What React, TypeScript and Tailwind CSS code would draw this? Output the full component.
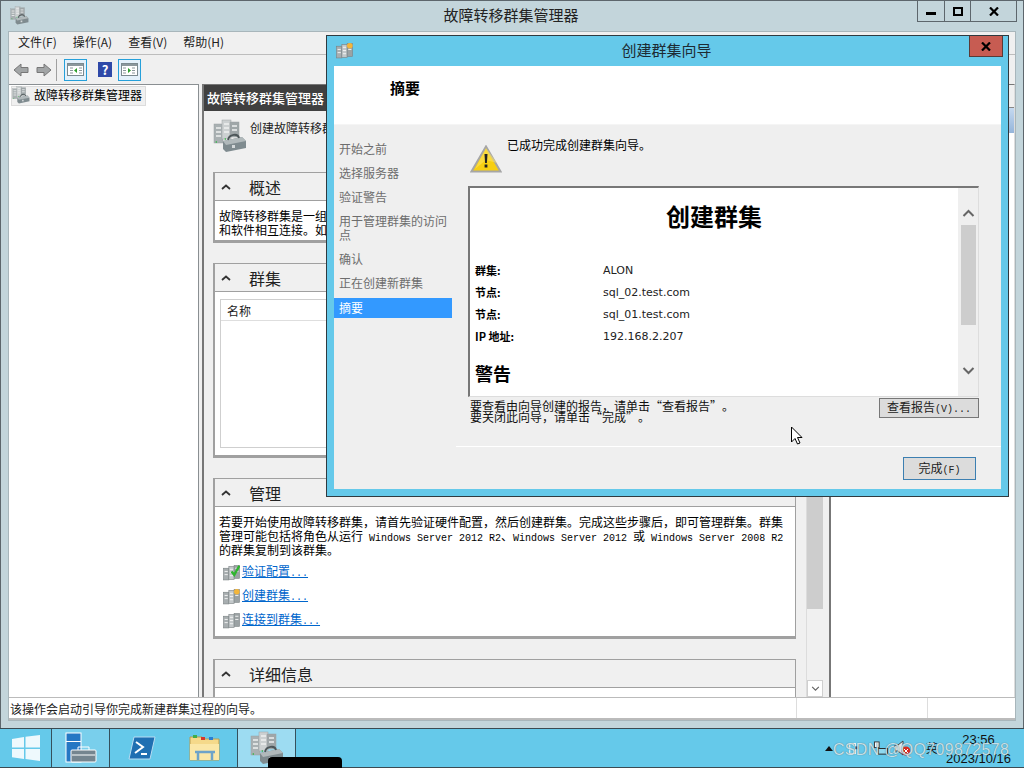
import React from "react";

const cjk = "font-['Noto_Sans_CJK_SC','Liberation_Sans',sans-serif]";
const mono = "font-['Liberation_Mono',monospace] text-[10px]";

function Servers({ className = "", accent }: { className?: string; accent?: "check" | "star" }) {
  return (
    <svg viewBox="0 0 16 16" className={className}>
      <rect x="0.5" y="4" width="5" height="11" fill="#a8aeb0" stroke="#7d8486" strokeWidth="0.6" />
      <rect x="5.5" y="2.5" width="5" height="12" fill="#c3c8ca" stroke="#7d8486" strokeWidth="0.6" />
      <rect x="10.5" y="1.5" width="5" height="12" fill="#9ba2a4" stroke="#7d8486" strokeWidth="0.6" />
      <path d="M1.5 7h3M1.5 10h3M6.5 5h3M6.5 8h3M6.5 11h3M11.5 4h3M11.5 7h3" stroke="#f2f2f2" strokeWidth="0.9" />
      {accent === "check" && <path d="M8 7l2.6 3.2L15.4 1.6" fill="none" stroke="#2fb52f" strokeWidth="2.2" />}
      {accent === "star" && <circle cx="13" cy="3.5" r="2.6" fill="#f4b63a" />}
    </svg>
  );
}

function Toolbox({ className = "" }: { className?: string }) {
  return (
    <svg viewBox="0 0 34 34" className={className}>
      <g stroke="#9aa1a3" strokeWidth="0.5">
        <rect x="1" y="5" width="9" height="19" fill="#a9b0b2" />
        <rect x="9" y="1" width="9" height="19" fill="#ccd0d1" />
        <rect x="17" y="3" width="9" height="15" fill="#9fa6a8" />
      </g>
      <path d="M3 9h5M3 13h5M3 17h5M11 5h5M11 9h5M11 13h5M19 7h5M19 11h5" stroke="#eef0f0" strokeWidth="1.5" />
      <path d="M2 23l2-1v2zM11 20l2-1v2z" fill="#37b54a" />
      <path d="M10 22l19-4 4 4v7l-20 4-3-3z" fill="#7f8b8f" />
      <path d="M10 22l19-4 4 4-20 4z" fill="#b1b9bb" />
      <path d="M15 21c1-6 10-7 11-2" fill="none" stroke="#4d5659" strokeWidth="1.8" />
      <rect x="19" y="26" width="3" height="3" fill="#d4d8d9" />
    </svg>
  );
}

function Section({ title, bodyClass, children }: { title: string; bodyClass: string; children: React.ReactNode }) {
  return (
    <section className="flex flex-col border border-[#a0a0a0] border-b-[3px] border-l-2 bg-white">
      <div className="flex h-[28px] shrink-0 items-center border-b border-[#a0a0a0] bg-[#f0f0f0]">
        <svg viewBox="0 0 10 6" className="ml-[6px] h-[6px] w-[10px]">
          <path d="M1 5l4-3.500L9 5" fill="none" stroke="#333" strokeWidth="1.8" />
        </svg>
        <span className="ml-[18px] text-[16px] leading-none text-[#222]">{title}</span>
      </div>
      <div className={bodyClass}>{children}</div>
    </section>
  );
}

function LinkRow({ accent, text }: { accent?: "check" | "star"; text: string }) {
  return (
    <div className="flex h-[24px] items-center">
      <Servers className="h-[17px] w-[17px]" accent={accent} />
      <a className="ml-[2px] text-[12px] leading-none text-[#0066cc] underline">
        {text}
        <span className={mono}>...</span>
      </a>
    </div>
  );
}

function WinBtn({ children, className }: { children: React.ReactNode; className: string }) {
  return <div className={`flex h-[21px] items-center justify-center border border-t-0 border-[#5d666c] ${className}`}>{children}</div>;
}

function ReportRow({ k, v }: { k: string; v: string }) {
  return (
    <div className="flex h-[22px] items-center">
      <span className="w-[128px] text-[11px] font-bold leading-none text-black">{k}</span>
      <span className="font-['DejaVu_Sans',sans-serif] text-[11px] leading-none text-[#222]">{v}</span>
    </div>
  );
}

function Quoted({ text }: { text: string }) {
  return (
    <>
      <span className="inline-block w-[12px] text-right">“</span>
      {text}
      <span className="inline-block w-[12px] text-left">”</span>
    </>
  );
}

function Wizard() {
  const steps = ["开始之前", "选择服务器", "验证警告", "用于管理群集的访问点", "确认", "正在创建新群集"];
  return (
    <div className="absolute left-[326px] top-[35px] flex h-[462px] w-[683px] flex-col border border-[#2f3a40] bg-[#65c9ea]">
      <div className="relative flex h-[30px] shrink-0 items-center justify-center">
        <Servers className="absolute left-[9px] top-[6px] h-[17px] w-[17px]" accent="star" />
        <span className="mb-[4px] pr-[2px] text-[15px] leading-none text-[#1d2b33]">创建群集向导</span>
        <div className="absolute right-[5px] top-0 flex h-[21px] w-[34px] items-center justify-center border border-t-0 border-[#5a3a36] bg-[#c75c52]">
          <svg viewBox="0 0 10 9" className="h-[9px] w-[10px]"><path d="M1 .5l8 8M9 .5l-8 8" stroke="#000" strokeWidth="2.2" /></svg>
        </div>
      </div>
      <div className="mx-[7px] mb-[7px] flex min-h-0 flex-1 flex-col bg-[#efefef]">
        <div className="flex h-[59px] shrink-0 items-start border-b border-[#f5f5f5] bg-white pl-[56px] pt-[13px]">
          <span className="text-[15px] font-bold leading-[18px] text-black">摘要</span>
        </div>
        <div className="mt-[2px] flex min-h-0 flex-1">
          <nav className="w-[120px] shrink-0 pt-[10px] text-[12px]">
            {steps.map((s) => (
              <div key={s} className="px-[5px] py-[5px] leading-[14px] text-[#6d6d6d]">{s}</div>
            ))}
            <div className="mr-[2px] mt-[3px] flex h-[20px] items-center bg-[#3399ff] px-[5px] text-white">摘要</div>
          </nav>
          <div className="ml-[2px] flex min-w-0 flex-1 flex-col">
            <div className="flex h-[59px] shrink-0 pl-[14px] pt-[18px]">
              <svg viewBox="0 0 32 28" className="h-[28px] w-[32px]">
                <path d="M16 1.500L30.500 26.500H1.500z" fill="#f7cf12" stroke="#a6a6a6" strokeWidth="2" />
                <path d="M16 3L5 24l11-9 11 3z" fill="#ffe76a" opacity="0.5" />
                <path d="M14.500 9h3l-.6 9h-1.800z" fill="#222" />
                <rect x="14.600" y="19.500" width="2.800" height="3" fill="#222" />
              </svg>
              <span className="ml-[5px] mt-[-7px] text-[12px] leading-[14px] text-black">已成功完成创建群集向导。</span>
            </div>
            <div className="ml-[12px] flex h-[211px] w-[511px] shrink-0 border-t-2 border-l-2 border-r border-b border-[#777] border-r-[#ddd] border-b-[#ddd]">
              <div className="min-w-0 flex-1 overflow-hidden bg-white pl-[5px]">
                <h1 className="mt-[12px] pr-[5px] text-center text-[24px] font-bold leading-[32px] text-black">创建群集</h1>
                <div className="mt-[27px]">
                  <ReportRow k="群集:" v="ALON" />
                  <ReportRow k="节点:" v="sql_02.test.com" />
                  <ReportRow k="节点:" v="sql_01.test.com" />
                  <ReportRow k="IP 地址:" v="192.168.2.207" />
                </div>
                <h2 className="mt-[15px] text-[18px] font-bold leading-[22px] text-black">警告</h2>
              </div>
              <div className="flex w-[20px] shrink-0 flex-col items-center bg-[#efefef] pt-[21px]">
                <svg viewBox="0 0 12 8" className="h-[8px] w-[13px]"><path d="M1 7l5-5 5 5" fill="none" stroke="#666" strokeWidth="2" /></svg>
                <div className="mt-[8px] h-[100px] w-[15px] bg-[#cdcdcd]" />
                <svg viewBox="0 0 12 8" className="mt-[42px] h-[8px] w-[13px]"><path d="M1 1l5 5 5-5" fill="none" stroke="#666" strokeWidth="2" /></svg>
              </div>
            </div>
            <div className="ml-[14px] flex h-[49px] shrink-0 items-start justify-between pr-[22px]">
              <div className="pt-[3px] text-[12px] leading-[11px] text-[#111]">
                <div>要查看由向导创建的报告，请单击<Quoted text="查看报告" />。</div>
                <div>要关闭此向导，请单击<Quoted text="完成" />。</div>
              </div>
              <button className="mt-[1px] h-[20px] w-[100px] border border-[#777] bg-[#dcdcdc] text-[12px] leading-none text-[#222]">查看报告<span className={mono}>(V)...</span></button>
            </div>
            <div className="flex min-h-0 flex-1 items-center justify-end border-t border-white pr-[25px]">
              <button className="mt-[1px] h-[23px] w-[73px] border border-[#3c7fb1] bg-[#dcdcdc] text-[12px] leading-none text-[#222]">完成<span className={mono}>(F)</span></button>
            </div>
          </div>
        </div>
      </div>
    </div>
  );
}

export default function App() {
  return (
    <div className={`relative flex h-[768px] w-[1024px] flex-col overflow-hidden bg-[#c3d5db] text-[12px] ${cjk}`}>
      <div className="flex min-h-0 flex-1 flex-col border-x border-t border-[#5d666c]">
        <div className="relative flex h-[30px] shrink-0 items-center justify-center">
          <Toolbox className="absolute left-[9px] top-[5px] h-[19px] w-[19px]" />
          <span className="mb-[4px] pr-[2px] text-[15px] leading-none text-[#222]">故障转移群集管理器</span>
          <div className="absolute right-[6px] top-0 flex">
            <WinBtn className="w-[28px]"><span className="mt-[4px] h-[3px] w-[10px] bg-black" /></WinBtn>
            <WinBtn className="w-[26px] border-l-0"><span className="h-[9px] w-[10px] border-2 border-black" /></WinBtn>
            <WinBtn className="w-[46px] border-l-0">
              <svg viewBox="0 0 10 9" className="h-[9px] w-[10px]"><path d="M1 .5l8 8M9 .5l-8 8" stroke="#000" strokeWidth="2.2" /></svg>
            </WinBtn>
          </div>
        </div>
        <div className="mx-[7px] flex min-h-0 flex-1 flex-col border border-[#a8b6bb] bg-[#f0f0f0]">
          <div className="flex h-[23px] shrink-0 items-center border-b border-[#bdbdbd] pb-[2px] pl-[9px] text-[12px] leading-none text-[#222]">
            <span className="mr-[16px]">文件(F)</span>
            <span className="mr-[16px]">操作(A)</span>
            <span className="mr-[16px]">查看(V)</span>
            <span>帮助(H)</span>
          </div>
          <div className="flex h-[29px] shrink-0 items-center pl-[4px]">
            <svg viewBox="0 0 16 14" className="h-[14px] w-[16px]"><path d="M8 1L1 7l7 6V9.500h7v-5H8z" fill="#a2a5a6" stroke="#777" /></svg>
            <svg viewBox="0 0 16 14" className="ml-[7px] h-[14px] w-[16px]"><path d="M8 1l7 6-7 6V9.500H1v-5h7z" fill="#a2a5a6" stroke="#777" /></svg>
            <span className="ml-[4px] h-[22px] w-[1px] bg-[#a0a0a0]" />
            <div className="ml-[7px] flex h-[22px] w-[23px] items-center justify-center border border-[#26a0da] bg-[#e4f1fb]">
              <svg viewBox="0 0 17 13" className="h-[13px] w-[17px]"><rect x=".5" y=".5" width="16" height="12" fill="#fff" stroke="#7b8a90" /><rect x="1" y="1" width="15" height="2" fill="#8b979c" /><path d="M3 5h3M3 7.500h3M3 10h3M12 5h3M12 7.500h3M12 10h3" stroke="#8b979c" /><path d="M10 5v5L7 7.500z" fill="#2ea02e" /></svg>
            </div>
            <div className="ml-[11px] flex h-[15px] w-[14px] items-center justify-center bg-[#2f49a8] text-[13px] font-bold leading-none text-white">?</div>
            <div className="ml-[6px] flex h-[22px] w-[23px] items-center justify-center border border-[#26a0da] bg-[#e4f1fb]">
              <svg viewBox="0 0 17 13" className="h-[13px] w-[17px]"><rect x=".5" y=".5" width="16" height="12" fill="#fff" stroke="#7b8a90" /><rect x="1" y="1" width="15" height="2" fill="#8b979c" /><path d="M2 5h3M2 7.500h3M2 10h3M11 5h3M11 7.500h3M11 10h3" stroke="#8b979c" /><path d="M7 5v5l3-2.500z" fill="#2ea02e" /></svg>
            </div>
          </div>
          <div className="flex min-h-0 flex-1">
            <aside className="w-[190px] shrink-0 border-t border-r border-[#8a8f92] bg-white px-[2px] py-[1px]">
              <div className="flex h-[20px] w-[135px] items-center border border-[#dcdcdc] bg-[#f0f0f0] pb-[2px]">
                <Toolbox className="h-[18px] w-[18px]" />
                <span className="ml-[4px] text-[12px] leading-none text-black">故障转移群集管理器</span>
              </div>
            </aside>
            <main className="ml-[3px] flex w-[621px] shrink-0 overflow-hidden border-t border-l-2 border-[#777]">
              <div className="flex min-w-0 flex-1 flex-col overflow-hidden">
                <div className="flex h-[26px] shrink-0 items-center bg-[#404040] pb-[2px] pl-[3px] text-[13px] font-medium leading-none text-white">故障转移群集管理器</div>
                <div className="flex h-[61px] shrink-0 items-start pl-[9px] pt-[8px]">
                  <Toolbox className="h-[34px] w-[34px]" />
                  <span className="ml-[3px] pt-[2px] text-[12px] leading-[14px] text-[#222]">创建故障转移群集或将群集添加到管理控制台</span>
                </div>
                <div className="ml-[9px] mr-[10px] flex min-h-0 flex-1 flex-col gap-[20px] overflow-hidden">
                  <Section title="概述" bodyClass="h-[39px] px-[4px] pt-[8px] text-[12px] leading-[14px] text-black">
                    <div className="whitespace-nowrap">故障转移群集是一组独立计算机，这些计算机协同工作</div>
                    <div className="whitespace-nowrap">和软件相互连接。如果其中一个节点发生故障</div>
                  </Section>
                  <Section title="群集" bodyClass="h-[163px] px-[5px] pt-[7px]">
                    <div className="h-[149px] border border-[#cfcfcf]">
                      <div className="flex h-[21px] items-center border-b border-[#dedede] pl-[6px] pt-[1px] text-[12px] leading-none text-[#222]">名称</div>
                    </div>
                  </Section>
                  <Section title="管理" bodyClass="h-[129px] px-[4px] pt-[8px]">
                    <div className="whitespace-pre text-[12px] leading-[14px] text-black">
                      <div className="h-[14px]">若要开始使用故障转移群集，请首先验证硬件配置，然后创建群集。完成这些步骤后，即可管理群集。群集</div>
                      <div className="h-[14px]">管理可能包括将角色从运行<span className={`${mono} leading-[14px]`}> Windows Server 2012 R2</span>、<span className={`${mono} leading-[14px]`}>Windows Server 2012 </span>或<span className={`${mono} leading-[14px]`}> Windows Server 2008 R2</span></div>
                      <div className="h-[14px]">的群集复制到该群集。</div>
                    </div>
                    <div className="mt-[3px] pl-[4px]">
                      <LinkRow accent="check" text="验证配置" />
                      <LinkRow accent="star" text="创建群集" />
                      <LinkRow text="连接到群集" />
                    </div>
                  </Section>
                  <Section title="详细信息" bodyClass="h-[40px]"><span /></Section>
                </div>
              </div>
              <div className="flex w-[17px] shrink-0 flex-col border-l border-[#dcdcdc] bg-[#f0f0f0]">
                <div className="mt-[410px] h-[114px] w-full bg-[#cdcdcd]" />
                <div className="flex-1" />
                <div className="flex h-[17px] items-center justify-center border border-[#cfcfcf] bg-white">
                  <svg viewBox="0 0 10 6" className="h-[5px] w-[9px]"><path d="M1 1l4 4 4-4" fill="none" stroke="#606060" strokeWidth="1.3" /></svg>
                </div>
              </div>
            </main>
            <aside className="ml-[6px] flex min-w-0 flex-1 flex-col border-t border-l-2 border-[#777] border-r border-r-[#ddd] bg-white">
              <div className="h-[23px] border-b border-[#888] bg-[#f0f0f0]" />
              <div className="h-[25px] bg-gradient-to-b from-[#c5d9f0] to-[#95b5da]" />
            </aside>
          </div>
          <div className="flex h-[23px] shrink-0 border-t border-b-2 border-[#bbb] bg-white text-[12px] leading-[21px] text-[#222]">
            <div className="w-[787px] pl-[1px]">该操作会启动引导你完成新建群集过程的向导。</div>
            <div className="w-[132px] border-x border-[#ddd]" />
            <div className="flex-1" />
          </div>
        </div>
        <div className="h-[7px] shrink-0" />
      </div>
      <footer className="flex h-[40px] shrink-0 border-y border-[#3b4a52] bg-[#65c9ea]">
        <div className="flex w-[51px] items-center justify-center">
          <svg viewBox="0 0 28 26" className="ml-[1px] h-[26px] w-[28px]"><path d="M0 4l12-2v10.500H0zM13.500 1.800L28 0v12.500H13.500zM0 14h12v10L0 22.300zM13.500 14H28v12l-14.500-2z" fill="#eef9fd" /></svg>
        </div>
        <div className="flex w-[59px] items-center justify-center border-x border-[#35505c] bg-[#79cfec]">
          <svg viewBox="0 0 32 32" className="h-[32px] w-[32px]"><rect x="1" y="1" width="15" height="29" fill="#2477c4" stroke="#fff" /><rect x="1" y="9" width="15" height="1" fill="#fff" /><rect x="6" y="18" width="25" height="12" rx="1" fill="#75858f" stroke="#fff" /><path d="M13 18v-3h11v3" fill="none" stroke="#fff" /><path d="M7 23h23" stroke="#fff" /></svg>
        </div>
        <div className="flex w-[63px] items-center justify-center">
          <svg viewBox="0 0 28 24" className="h-[24px] w-[28px]"><path d="M6 1h21l-5 22H1z" fill="#1f6fb2" stroke="#b8dcf2" /><path d="M8 6l7 5-8 6M13 18h6" fill="none" stroke="#fff" strokeWidth="2" /></svg>
        </div>
        <div className="flex w-[64px] items-center justify-center">
          <svg viewBox="0 0 32 28" className="h-[28px] w-[32px]"><path d="M1 3h12l2 2h15v21H1z" fill="#f5d98a" stroke="#b99d50" /><rect x="4" y="1" width="4" height="3" fill="#3fae49" /><rect x="12" y="3" width="4" height="3" fill="#d5372c" /><rect x="20" y="3" width="4" height="3" fill="#2a7fd1" /><path d="M1 10h29v16H1z" fill="#fbe7a7" /><path d="M9 26v-8h14v8M6 18h20" fill="none" stroke="#6ea3c9" strokeWidth="2.500" /></svg>
        </div>
        <div className="flex w-[59px] items-start justify-center border-x border-[#35505c] bg-[#9ddcf2] pt-[2px]">
          <Toolbox className="h-[34px] w-[34px]" />
        </div>
        <div className="ml-auto flex items-center">
          <svg viewBox="0 0 8 5" className="mr-[16px] h-[5px] w-[8px]"><path d="M0 5l4-5 4 5z" fill="#111" /></svg>
          <svg viewBox="0 0 14 16" className="mr-[14px] h-[15px] w-[10px]"><path d="M1 1h8v14H1z" fill="none" stroke="#f4f4f4" strokeWidth="1.500" /><path d="M9 5h4v4H9z" fill="#333" /></svg>
          <svg viewBox="0 0 16 16" className="mr-[5px] h-[15px] w-[16px]"><rect x="1" y="1" width="5" height="6" fill="#fff" stroke="#333" /><rect x="5" y="8" width="10" height="6" fill="#8fd8ef" stroke="#222" /></svg>
          <svg viewBox="0 0 18 16" className="mr-[14px] h-[16px] w-[18px]"><path d="M1 5h3l5-4v14l-5-4H1z" fill="#dfe7ea" stroke="#444" /><circle cx="12" cy="11" r="4.500" fill="#d92b20" /><path d="M10 9l4 4M14 9l-4 4" stroke="#fff" /></svg>
          <span className="mr-[8px] text-[12px] leading-none text-[#111]">英</span>
          <div className="mr-[13px] flex w-[65px] flex-col items-center pt-[1px] font-['Liberation_Sans',sans-serif] text-[13px] leading-[19px] text-[#111]">
            <span>23:56</span>
            <span>2023/10/16</span>
          </div>
        </div>
      </footer>
      <Wizard />
      <svg viewBox="0 0 12 20" className="absolute left-[790px] top-[426px] h-[20px] w-[13px]">
        <path d="M1 1v15l3.500-3.500L7 18l2.500-1L7 11.500h4.500z" fill="#fff" stroke="#000" strokeWidth="1" />
      </svg>
      <div className="absolute left-[268px] top-[757px] h-[14px] w-[74px] rounded-t-[4px] bg-black" />
      <div className="absolute left-[833px] top-[740px] font-['Liberation_Sans',sans-serif] text-[16px] leading-[20px] tracking-[0.3px] text-[#cfe3ea] opacity-90 [text-shadow:0_0_1px_#4a5a60]">CSDN @QQ709872578</div>
    </div>
  );
}
